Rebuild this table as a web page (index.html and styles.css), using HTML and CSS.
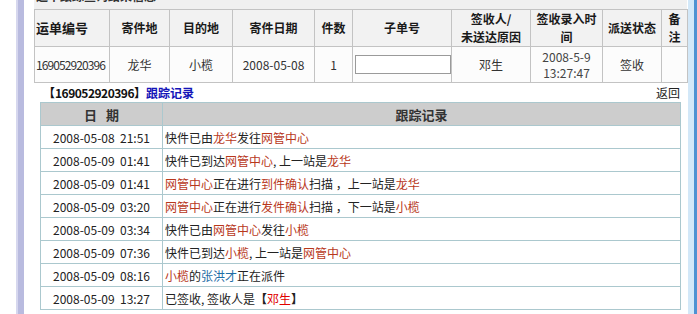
FILE: index.html
```html
<!DOCTYPE html>
<html lang="zh-CN">
<head>
<meta charset="utf-8">
<title>运单跟踪</title>
<link rel="stylesheet" href="styles.css">
</head>
<body>
<div class="lgap"></div>
<div class="lbar"></div>
<div class="main">
  <div class="title"><span>运单跟踪查询结果信息</span></div>
  <table class="info">
    <colgroup>
      <col class="c1"><col class="c2"><col class="c3"><col class="c4"><col class="c5">
      <col class="c6"><col class="c7"><col class="c8"><col class="c9"><col class="c10">
    </colgroup>
    <tr class="head">
      <th class="lefth">运单编号</th>
      <th>寄件地</th>
      <th>目的地</th>
      <th>寄件日期</th>
      <th>件数</th>
      <th>子单号</th>
      <th>签收人/<br>未送达原因</th>
      <th>签收录入时间</th>
      <th>派送状态</th>
      <th>备注</th>
    </tr>
    <tr class="data">
      <td class="waybill">169052920396</td>
      <td>龙华</td>
      <td>小榄</td>
      <td>2008-05-08</td>
      <td>1</td>
      <td><input class="sub" type="text"></td>
      <td>邓生</td>
      <td class="time">2008-5-9<br>13:27:47</td>
      <td>签收</td>
      <td></td>
    </tr>
  </table>
  <div class="bar">
    <div class="code"><b>【<span class="num">169052920396</span>】</b><a class="link" href="#">跟踪记录</a></div>
    <a class="back" href="#">返回</a>
  </div>
  <table class="trace">
    <colgroup><col class="d1"><col class="d2"></colgroup>
    <tr><th>日&nbsp;&nbsp;&nbsp;期</th><th>跟踪记录</th></tr>
    <tr><td class="date">2008-05-08&nbsp;&nbsp;21:51</td><td>快件已由<span class="p">龙华</span>发往<span class="p">网管中心</span></td></tr>
    <tr><td class="date">2008-05-09&nbsp;&nbsp;01:41</td><td>快件已到达<span class="p">网管中心</span>, 上一站是<span class="p">龙华</span></td></tr>
    <tr><td class="date">2008-05-09&nbsp;&nbsp;01:41</td><td><span class="p">网管中心</span>正在进行<span class="p">到件确认</span>扫描 ，上一站是<span class="p">龙华</span></td></tr>
    <tr><td class="date">2008-05-09&nbsp;&nbsp;03:20</td><td><span class="p">网管中心</span>正在进行<span class="p">发件确认</span>扫描 ，下一站是<span class="p">小榄</span></td></tr>
    <tr><td class="date">2008-05-09&nbsp;&nbsp;03:34</td><td>快件已由<span class="p">网管中心</span>发往<span class="p">小榄</span></td></tr>
    <tr><td class="date">2008-05-09&nbsp;&nbsp;07:36</td><td>快件已到达<span class="p">小榄</span>, 上一站是<span class="p">网管中心</span></td></tr>
    <tr><td class="date">2008-05-09&nbsp;&nbsp;08:16</td><td><span class="p">小榄</span>的<span class="b">张洪才</span>正在派件</td></tr>
    <tr><td class="date">2008-05-09&nbsp;&nbsp;13:27</td><td>已签收, 签收人是<b>【</b><span class="r">邓生</span><b>】</b></td></tr>
  </table>
</div>
<div class="rbar"></div>
</body>
</html>
```
FILE: styles.css
```css
html, body {
  margin: 0;
  padding: 0;
  background: #ffffff;
}
body {
  display: flex;
  height: 314px;
  overflow: hidden;
  font-family: "Noto Sans CJK SC", "Liberation Sans", sans-serif;
  font-size: 12px;
  color: #222;
}
.lgap { width: 16px; flex: none; }
.lbar {
  width: 6px;
  flex: none;
  background: #b9bbdf;
  border-left: 2px solid #d6d7ee;
}
.main {
  flex: 1;
  padding-left: 10px;
  min-width: 0;
}
.rbar {
  width: 3px;
  flex: none;
  background: #4e92d2;
  border-left: 6px solid #d3e8f8;
}
.title {
  height: 9px;
  overflow: hidden;
  background: #f0f0f0;
  width: 653px;
}
.title span {
  display: block;
  margin-top: -10px;
  line-height: 12px;
  font-weight: bold;
  padding-left: 2px;
  color: #333;
}
.num { letter-spacing: -0.5px; }

table { border-collapse: collapse; table-layout: fixed; }

.info { width: 653px; }
.info .c1 { width: 75px; }
.info .c2 { width: 60px; }
.info .c3 { width: 63px; }
.info .c4 { width: 82px; }
.info .c5 { width: 38px; }
.info .c6 { width: 99px; }
.info .c7 { width: 79px; }
.info .c8 { width: 72px; }
.info .c9 { width: 59px; }
.info .c10 { width: 26px; }
.info th, .info td {
  border: 1px solid #c3c3c3;
  padding: 0 1px;
  text-align: center;
  height: 35px;
}
.info th {
  background: #f2f2f2;
  font-weight: bold;
  line-height: 18px;
  color: #1a1a1a;
  font-size: 12px;
}
.info th.lefth { text-align: left; font-size: 13px; }
.info td { background: #fcfcfc; color: #333; line-height: 16px; }
.info td.waybill {
  text-align: left;
  padding-left: 1px;
  padding-right: 0;
  letter-spacing: -0.9px;
  white-space: nowrap;
}
.info td.time { color: #444; }
.sub {
  width: 92px;
  height: 17px;
  border: 1px solid #9a9a9a;
  padding: 0 1px;
  margin: 0;
  box-sizing: content-box;
  display: block;
  margin-left: 1px;
  background: #fff;
}
.bar {
  width: 640px;
  height: 19px;
  display: flex;
  justify-content: space-between;
  align-items: center;
  padding-left: 9px;
  box-sizing: border-box;
  line-height: 19px;
}
.code b { color: #111; }
.link { color: #1414b8; font-weight: bold; text-decoration: none; }
.back { color: #222; text-decoration: none; margin-right: -6px; }

.trace { width: 640px; margin-left: 6px; }
.trace .d1 { width: 122px; }
.trace .d2 { width: 518px; }
.trace th, .trace td {
  border: 1px solid #abc8ce;
  height: 22px;
  padding: 0;
}
.trace th {
  background: #cdcdcd;
  color: #333;
  font-weight: bold;
  font-size: 13px;
}
.trace td { background: #fff; padding-left: 2px; color: #222; }
.trace td.date { text-align: center; padding-left: 0; }
.p { color: #b8381c; }
.b { color: #1f6ea6; }
.r { color: #e00000; }
```
